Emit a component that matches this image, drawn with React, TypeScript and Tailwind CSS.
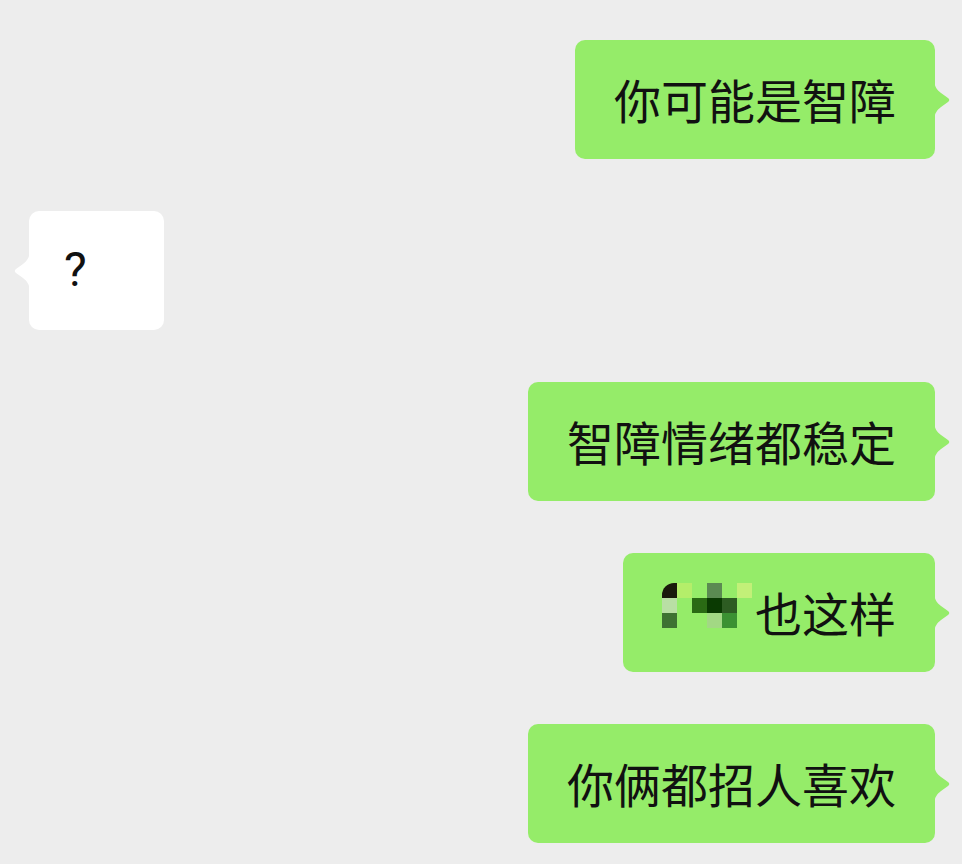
import React from "react";

const cjk = "font-['Noto_Sans_CJK_SC','Noto_Sans',sans-serif]";

// little speech-bubble tail, points right by default
function Tail({ color, side }: { color: string; side: "left" | "right" }) {
  const cls =
    side === "right"
      ? "absolute left-[calc(100%-1px)] top-1/2 -translate-y-1/2"
      : "absolute right-[calc(100%-1px)] top-1/2 -translate-y-1/2 -scale-x-100";
  return (
    <svg className={cls} width="17" height="38" viewBox="0 0 17 38">
      <path
        d="M0 0 C1 6 3 9 7 12 L14 17 Q16.5 19 14 21 L7 26 C3 29 1 32 0 38 Z"
        fill={color}
      />
    </svg>
  );
}

function Mine({ children }: { children: React.ReactNode }) {
  return (
    <div className="flex justify-end">
      <div className="relative flex h-[119px] items-center rounded-[10px] bg-[#95ec69] px-[39px]">
        <span className={`${cjk} -mt-[3px] text-[47px] leading-none text-[#111111]`}>
          {children}
        </span>
        <Tail color="#95ec69" side="right" />
      </div>
    </div>
  );
}

function Theirs({ children }: { children: React.ReactNode }) {
  return (
    <div className="flex justify-start">
      <div className="relative flex h-[119px] w-[135px] items-center rounded-[10px] bg-white pl-[35px]">
        <span className="-mt-[2px] font-['Roboto','Liberation_Sans',sans-serif] text-[48px] leading-none text-[#111111]">
          {children}
        </span>
        <Tail color="#ffffff" side="left" />
      </div>
    </div>
  );
}

// mosaic over the censored name
const mosaic: string[][] = [
  ["#1a1a0c", "#b4ee6a", "transparent", "#5b8a52", "transparent", "#c2f078"],
  ["#b9dfa4", "transparent", "#2a6a14", "#0a3a02", "#2d5c22", "transparent"],
  ["#3e7232", "transparent", "transparent", "#a2d884", "#3b9132", "transparent"],
];

function Mosaic() {
  return (
    <div className="mr-[3px] mb-[14px] grid grid-cols-[15px_15px_15px_15px_15px_15px] grid-rows-[15px_15px_15px]">
      {mosaic.flatMap((row, r) =>
        row.map((c, i) => (
          <div
            key={`${r}-${i}`}
            className={r === 0 && i === 0 ? "rounded-tl-[12px]" : ""}
            style={{ backgroundColor: c }}
          />
        ))
      )}
    </div>
  );
}

export default function App() {
  return (
    <div className="flex h-[864px] w-full flex-col gap-[52px] overflow-hidden bg-[#ededed] pt-[40px] pr-[27px] pl-[29px]">
      <Mine>你可能是智障</Mine>
      <Theirs>?</Theirs>
      <Mine>智障情绪都稳定</Mine>
      <div className="flex justify-end">
        <div className="relative flex h-[119px] items-center rounded-[10px] bg-[#95ec69] px-[39px]">
          <Mosaic />
          <span className={`${cjk} -mt-[3px] text-[47px] leading-none text-[#111111]`}>
            也这样
          </span>
          <Tail color="#95ec69" side="right" />
        </div>
      </div>
      <Mine>你俩都招人喜欢</Mine>
    </div>
  );
}
